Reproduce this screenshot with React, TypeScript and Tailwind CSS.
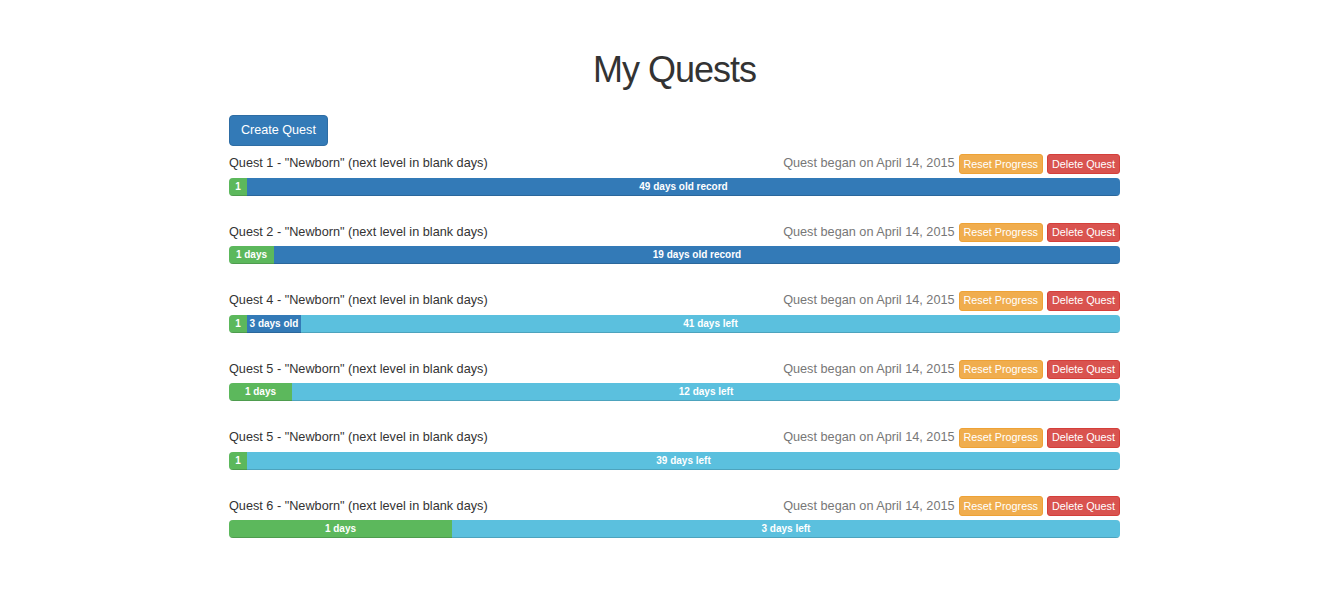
import React from "react";

type Seg = { w: number | null; label: string; color: string };

const green = "bg-[#5cb85c]";
const blue = "bg-[#337ab7]";
const info = "bg-[#5bc0de]";

const quests: { name: string; segs: Seg[] }[] = [
  {
    name: 'Quest 1 - "Newborn" (next level in blank days)',
    segs: [
      { w: 18, label: "1", color: green },
      { w: null, label: "49 days old record", color: blue },
    ],
  },
  {
    name: 'Quest 2 - "Newborn" (next level in blank days)',
    segs: [
      { w: 45, label: "1 days", color: green },
      { w: null, label: "19 days old record", color: blue },
    ],
  },
  {
    name: 'Quest 4 - "Newborn" (next level in blank days)',
    segs: [
      { w: 18, label: "1", color: green },
      { w: 54, label: "3 days old", color: blue },
      { w: null, label: "41 days left", color: info },
    ],
  },
  {
    name: 'Quest 5 - "Newborn" (next level in blank days)',
    segs: [
      { w: 63, label: "1 days", color: green },
      { w: null, label: "12 days left", color: info },
    ],
  },
  {
    name: 'Quest 5 - "Newborn" (next level in blank days)',
    segs: [
      { w: 18, label: "1", color: green },
      { w: null, label: "39 days left", color: info },
    ],
  },
  {
    name: 'Quest 6 - "Newborn" (next level in blank days)',
    segs: [
      { w: 223, label: "1 days", color: green },
      { w: null, label: "3 days left", color: info },
    ],
  },
];

const QuestRow = ({ name, segs }: { name: string; segs: Seg[] }) => {
  return (
    <div className="mb-[26.45px]">
      <div className="flex h-[20px] items-center justify-between">
        <span className="text-[12.7px] text-[#333]">{name}</span>
        <div className="flex items-center">
          <span className="mr-[4px] text-[12.7px] text-[#777]">
            Quest began on April 14, 2015
          </span>
          <button className="mr-[4px] h-[19.5px] rounded-[3px] border border-[#eea236] bg-[#f0ad4e] px-[4px] text-[10.8px] leading-none text-white">
            Reset Progress
          </button>
          <button className="h-[19.5px] rounded-[3px] border border-[#d43f3a] bg-[#d9534f] px-[4px] text-[10.8px] leading-none text-white">
            Delete Quest
          </button>
        </div>
      </div>
      <div className="mt-[4px] flex h-[18px] overflow-hidden rounded-[4px] bg-[#f5f5f5] shadow-[inset_0_1px_2px_rgba(0,0,0,0.1)]">
        {segs.map((s, i) => (
          <div
            key={i}
            className={`${s.color} ${
              s.w === null ? "flex-1" : "shrink-0"
            } text-center text-[10px] font-bold leading-[18px] text-white shadow-[inset_0_-1px_0_rgba(0,0,0,0.15)]`}
            style={s.w === null ? undefined : { width: s.w }}
          >
            {s.label}
          </div>
        ))}
      </div>
    </div>
  );
};

export default function App() {
  return (
    <div
      className="min-h-[596px] bg-white pt-[50px]"
      style={{ fontFamily: '"Liberation Sans", Arial, sans-serif' }}
    >
      <div className="ml-[229px] w-[891px]">
        <h1 className="text-center text-[36px] font-normal leading-[40px] tracking-[-1px] text-[#333]">
          My Quests
        </h1>
        <button className="mt-[25px] h-[31px] rounded-[4px] border border-[#2e6da4] bg-[#337ab7] px-[11px] text-[12.6px] text-white">
          Create Quest
        </button>
        <div className="mt-[8px]">
          {quests.map((q, i) => (
            <QuestRow key={i} name={q.name} segs={q.segs} />
          ))}
        </div>
      </div>
    </div>
  );
}
